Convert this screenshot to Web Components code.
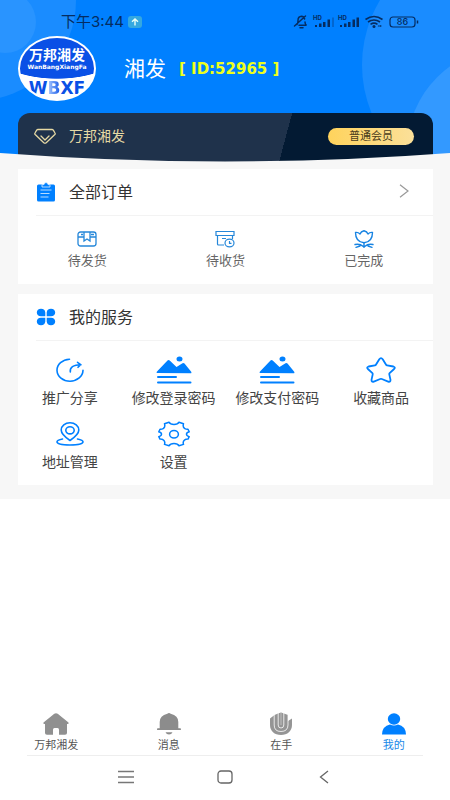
<!DOCTYPE html>
<html lang="zh-CN">
<head>
<meta charset="utf-8">
<meta name="viewport" content="width=device-width, initial-scale=1">
<title>我的</title>
<style>
  body { margin: 0; background: #fff; color: #333; font-family: Inter, "Noto Sans CJK SC", sans-serif; }
</style>
</head>
<body>
<profile-page></profile-page>

<script>
const ICONS = {
  clipboard: ['0 0 20 20', `<g fill="#0080ff"><rect x="1" y="2.5" width="18" height="17" rx="1.5"/><path d="M6 5V2.6h2a2 2 0 0 1 4 0h2V5z" stroke="#fff" stroke-width=".7"/></g><path d="M4.5 8h11M4.5 11.5h9M4.5 15h8" stroke="#b8dcff" stroke-width="1.2"/>`],
  clover: ['0 0 20 18', `<g fill="#0080ff"><path d="M9.300 8.300V4.500A4.300 4 0 0 0 5 .8C2.500 .8.800 2.300.800 4.500S2.500 8.300 5 8.300zM10.700 8.300V4.500A4.300 4 0 0 1 15 .8c2.500 0 4.200 1.500 4.200 3.700S17.500 8.300 15 8.300zM9.300 9.700V13.500a4.300 4 0 0 1-4.300 3.700C2.500 17.200.8 15.700.8 13.500S2.500 9.700 5 9.700zM10.700 9.700V13.500a4.300 4 0 0 0 4.300 3.700c2.500 0 4.200-1.500 4.200-3.700S17.500 9.700 15 9.700z"/></g>`],
  chevron: ['0 0 10 14', `<path d="M1 .8 9 7l-8 6.200" fill="none" stroke="#999" stroke-width="1.200"/>`],
  gem: ['0 0 22 16', `<g fill="none" stroke="#e6d9a4" stroke-width="1.300" stroke-linejoin="round" stroke-linecap="round"><path d="M4 1.500h14q.8 0 1.300.6L21 5q.5.800-.2 1.500l-8.600 8.200q-1.200 1-2.400 0L1.200 6.500Q.5 5.800 1 5l1.700-2.900Q3.200 1.500 4 1.500z"/><path d="m7 8 4 4 4-4"/></g>`],
  box: ['0 0 20 16', `<g fill="none" stroke="#2587d9" stroke-width="1.300"><rect x="1" y="1" width="18" height="14" rx="2.500"/><path d="M1 6h6m6 0h6M7 1v9l3-2 3 2V1M4 3.500h2M14 3.500h3"/></g>`],
  receive: ['0 0 20 18', `<g fill="none" stroke="#2587d9" stroke-width="1.200"><path d="M1 1.500h18v4H1zM2.500 5.500V14q0 1 1 1H9M17.500 5.500V9M7 8.500h4"/><ellipse cx="14.500" cy="13" rx="4.500" ry="3.800"/><path d="M14.500 11v2.300h2"/></g>`],
  tulip: ['0 0 20 18', `<g fill="none" stroke="#1783e2" stroke-width="1.400" stroke-linecap="round" stroke-linejoin="round"><path d="M1.500 2.500Q4 2 6 4q1-2.500 4-3.300Q13 1.500 14 4q2-2 4.500-1.500 0 9.500-8.500 10.300Q1.500 12 1.500 2.500z"/><path d="M10 13v4.500M1 14.500q5-1 8 1.800M19 14.500q-5-1-8 1.800M2 17.300l4-1.300M18 17.300 14 16"/></g>`],
  share: ['0 0 28 24', `<g fill="none" stroke="#0080ff" stroke-width="1.600" stroke-linecap="round" stroke-linejoin="round"><path d="M13.500 1.200A13 11 0 1 0 27 12.300"/><path d="M14.300 14q-1-7 10.700-7.300M21.500 4.300 24.700 6.600l-2.700 2.700"/></g>`],
  image: ['0 0 36 28', `<g fill="#0080ff"><path d="M.8 17Q.2 16.300 1 15.600L11.500 4.400q1-1 2.200 0L20.500 11l6-3.800q1-.6 2 .2L35 15.600q.9.700.2 1.600z"/><ellipse cx="23.500" cy="3" rx="3" ry="2.500"/><rect x="1" y="20" width="20" height="2" rx="1"/><rect x="1" y="25.500" width="34.500" height="2" rx="1"/></g>`],
  star: ['0 0 30 26', `<path d="M13.300 2.300q1.700-2.300 3.400 0l3.400 5.400q.3.500 1 .600l6.300 1.200q2.400.7.700 2.500l-4.500 4.200q-.5.500-.3 1.200l1.200 5.500q.1 2.400-2.300 1.700L15.800 22q-.8-.3-1.600 0l-6.400 2.600q-2.400.7-2.300-1.700l1.200-5.500q.2-.7-.3-1.200L1.900 12Q.2 10.200 2.600 9.500l6.300-1.200q.7-.1 1-.6z" fill="none" stroke="#0080ff" stroke-width="1.800" stroke-linejoin="round"/>`],
  place: ['0 0 28 24', `<g fill="none" stroke="#0080ff" stroke-width="1.600" stroke-linejoin="round" stroke-linecap="round"><path d="M14 18.500Q5.200 12.500 5.200 8A8.800 7.200 0 0 1 22.800 8q0 4.500-8.800 10.500z"/><ellipse cx="14" cy="8.300" rx="4.200" ry="3.600"/><path d="M6.500 17Q1 18 1 19.800C1 21.800 6.500 23 14 23s13-1.200 13-3.200q0-1.800-5.500-2.800"/></g>`],
  gear: ['0 0 32 26', `<g fill="none" stroke="#0080ff" stroke-width="1.500" stroke-linejoin="round"><path d="M11 1.200q1.200 2.300 5 2.300t5-2.300l4.500 1.600q-1 3.300 1.200 4.700 1.300.9 3.300.8l1.200 2.500q-2.700.8-2.700 2.400t2.700 2.400L30 18.100q-2-.1-3.300.8-2.200 1.400-1.200 4.500L21 24.800q-1.200-2.300-5-2.300t-5 2.300l-4.500-1.400q1-3.100-1.200-4.500Q4 18 2 18.100L.800 15.600q2.700-.8 2.700-2.400T.800 10.800L2 8.300q2 .1 3.300-.8 2.200-1.400 1.200-4.700z"/><ellipse cx="16" cy="13.200" rx="4.400" ry="3.700"/></g>`],
  home: ['0 0 26 22', `<path fill="#909090" d="M11.300.8q1.700-1 3.400 0L25.200 9.300q1.200 1.500-.6 1.700H24V20q0 1.700-2 1.700h-6v-5q0-1.700-1.500-1.700h-3q-1.500 0-1.500 1.700v5H4Q2 21.700 2 20V11h-.6Q-.4 10.800.8 9.300z"/>`],
  bell: ['0 0 24 24', `<g fill="#8c8c8c"><path d="M10.300 1.800q1.700-1.800 3.400 0Q21.300 3.600 21.300 10v6.300h1.900q.8 0 .8.900t-.8.900H.8Q0 18.100 0 17.200t.8-.9h1.900V10q0-6.400 7.600-8.200z"/><path d="M8.500 20.300h7Q14.500 22.500 12 22.500T8.500 20.300z"/></g>`],
  hand: ['0 0 24 24', `<path d="M1 6.500 5.500 3 9 1.500 12 .5l3 1 4 1.500v6l4-2.500V13c0 6-4.500 10-11 10S1 19 1 13z" fill="#959595"/><path d="M5.200 3v10q0 6.500 6.800 6.500t7-6.500V3M9.200 1v12q0 3 2.800 3t2.800-3V1" fill="none" stroke="#fff" stroke-width=".8"/><path d="M12 .8V13" stroke="#ddd" stroke-width=".6"/>`],
  person: ['0 0 24 22', `<g fill="#0080ff"><ellipse cx="12" cy="6" rx="6.200" ry="5.800"/><path d="M0 21.500Q.3 13 8 11.500q4 2.200 8 0 7.700 1.500 8 10z"/></g>`],
  menu: ['0 0 16 14', `<path d="M0 1.500h16M0 7h16M0 12.500h16" stroke="#777" stroke-width="1.300"/>`],
  square: ['0 0 16 14', `<rect x="1" y="1" width="14" height="12" rx="3" fill="none" stroke="#666" stroke-width="1.300"/>`],
  back: ['0 0 10 14', `<path d="M9 1 1.500 7 9 13" fill="none" stroke="#666" stroke-width="1.300"/>`],
  status: ['0 0 126 16', `<g fill="none" stroke="#052c61" stroke-width="1.500" stroke-linecap="round"><path d="M4 10.500q1-1 1-4 0-4 3.500-4.200Q11 2.300 11.600 5M12 8q0 2.500 1.500 3.200H6M1.500 12 12.500 2M7 13.700h3"/></g>
    <g fill="#052c61"><path d="M22 11h2v2h-2zM26 9.500h2.500V13H26zM30 8h2.500v5H30zM34.500 5.500H37V13h-2.500zM47 11h2v2h-2zM51 9.500h2.500V13H51zM55 8h2.500v5H55zM59.500 5.500H62V13h-2.500zM63.500 3.500H66V13h-2.500z"/><path d="M39 3.500h2V13h-2z" opacity=".3"/><circle cx="81" cy="12.500" r="1.500"/><path d="m84.500 12 2-1v2zm2.500-1 2 1-2 1z"/></g>
    <text x="20" y="6" font-size="6" font-weight="700" font-family="Inter,sans-serif" fill="#052c61">HD</text><text x="45" y="6" font-size="6" font-weight="700" font-family="Inter,sans-serif" fill="#052c61">HD</text>
    <g fill="none" stroke="#052c61" stroke-width="1.600"><path d="M72.500 5.500q8.500-6 17 0M75 8q6-4 12 0M77.500 10.300q3.500-2.300 7 0"/></g>
    <rect x="97" y="3" width="25" height="10" rx="3" fill="none" stroke="#052c61" stroke-width="1.200"/><path d="M124.500 6.500v3" stroke="#052c61" stroke-width="1.500"/>
    <text x="109.500" y="11" text-anchor="middle" font-size="9" font-weight="500" font-family="Inter,sans-serif" fill="#052c61">86</text>`],
  upload: ['0 0 14 12', `<rect width="14" height="12" rx="3" fill="#35a8e0"/><path d="M7 9.500v-6M4 5.800 7 3l3 2.800" fill="none" stroke="#e8fff8" stroke-width="1.400"/>`]
};

function define(name, html, init) {
  const template = document.createElement('template');
  template.innerHTML = html;
  customElements.define(name, class extends HTMLElement {
    constructor() {
      super();
      this.attachShadow({ mode: 'open' }).append(template.content.cloneNode(true));
    }
    connectedCallback() { if (init) init(this, this.shadowRoot); }
  });
}

define('ui-icon', `<style>:host{display:inline-flex;flex:none}svg{display:block}</style><span></span>`, (host, root) => {
  const [box, art] = ICONS[host.getAttribute('name')];
  const [, , w, h] = box.split(' ');
  root.querySelector('span').innerHTML = `<svg viewBox="${box}" width="${w}" height="${h}" aria-hidden="true">${art}</svg>`;
});

define('status-bar', `<style>
  :host{display:flex;align-items:center;justify-content:space-between;height:16px;padding:14px 31px 0 61px;color:#052c61;font-size:15px;line-height:16px}
  .time{display:flex;align-items:center;gap:4px}
</style><span class="time"><span>下午3:44</span><ui-icon name="upload"></ui-icon></span><ui-icon name="status"></ui-icon>`);

define('user-avatar', `<style>
  :host{display:flex;flex-direction:column;align-items:center;box-sizing:border-box;width:78px;height:65px;border:2px solid #fff;border-radius:50%;overflow:hidden;
    background:radial-gradient(ellipse 70px 34px at 50% 7px,#0a50e6 98%,#fff 100%);color:#fff;white-space:nowrap;padding-top:9px}
  .cn{font-size:14px;line-height:16px;font-weight:700}
  .en{font-size:6px;line-height:7px;font-weight:700;font-family:"DejaVu Sans",sans-serif}
  .mark{margin-top:10px;font:700 17px/16px "DejaVu Sans",sans-serif;color:#0a50e6}
  .mark span{background:linear-gradient(90deg,#a8c8ff,#0a50e6);-webkit-background-clip:text;background-clip:text;color:transparent}
</style><span class="cn">万邦湘发</span><span class="en">WanBangXiangFa</span><span class="mark">W<span>B</span>XF</span>`);

define('member-card', `<style>
  :host{display:flex;align-items:center;box-sizing:border-box;height:50px;padding:0 19px 4px 16px;border-radius:12px 12px 0 0;color:#e6d9a4;
    background:linear-gradient(105deg,#1f324b 64%,#031a33 64%)}
  .name{margin-left:13px;font-size:14px;line-height:20px;flex:1}
  .level{width:86px;height:17px;line-height:17px;border-radius:9px;text-align:center;font-size:11px;color:#4a3c1c;background:linear-gradient(90deg,#ffd35c,#fbe09a)}
</style><ui-icon name="gem"></ui-icon><span class="name"><slot></slot></span><span class="level"><slot name="level"></slot></span>`);

define('profile-header', `<style>
  :host{display:block;position:relative;overflow:hidden;background:#0080ff}
  .art,.curve{position:absolute;top:0;left:0}
  .art.right{left:auto;right:0}
  .curve{top:auto;bottom:0;width:100%;height:12px}
  .content{position:relative}
  .user{display:flex;align-items:center;padding:6px 18px 12px;height:65px}
  .nick{margin-left:28px;font-size:21px;line-height:28px;color:#fff}
  .id{margin-left:13px;font:700 15px/20px "DejaVu Sans",sans-serif;color:#eeff1c;white-space:pre}
  member-card{margin:0 17px 0 18px}
</style>
<svg class="art" width="90" height="110" aria-hidden="true"><circle cx="-25" cy="0" r="101" fill="#1a8cff"/><circle cx="5" cy="22" r="31" fill="#2994ff"/></svg>
<svg class="art right" width="90" height="163" aria-hidden="true"><circle cx="128" cy="65" r="126" fill="#1a8cff"/><circle cx="150" cy="150" r="103" fill="#3399ff"/></svg>
<div class="content">
  <status-bar></status-bar>
  <div class="user"><user-avatar></user-avatar><span class="nick">湘发</span><span class="id">[ ID:52965 ]</span></div>
  <member-card>万邦湘发<span slot="level">普通会员</span></member-card>
</div>
<svg class="curve" viewBox="0 0 450 12" preserveAspectRatio="none" aria-hidden="true"><path d="M0 2Q225 19 450 2V12H0z" fill="#f7f7f7"/></svg>`);

define('panel-box', `<style>
  :host{display:block;background:#fff}
  header{display:flex;align-items:center;height:46px;margin-left:18px;border-bottom:1px solid #f3f3f3}
  h2{flex:1;margin:0 0 0 13px;font-size:16px;line-height:22px;font-weight:400;color:#333}
  .more{border:0;background:none;padding:8px;margin-right:16px}
</style><header><h2></h2></header><slot></slot>`, (host, root) => {
  root.querySelector('h2').textContent = host.getAttribute('heading');
  const header = root.querySelector('header');
  header.insertAdjacentHTML('afterbegin', `<ui-icon name="${host.getAttribute('icon')}"></ui-icon>`);
  if (host.hasAttribute('more'))
    header.insertAdjacentHTML('beforeend', '<button class="more" aria-label="查看全部"><ui-icon name="chevron"></ui-icon></button>');
});

define('icon-button', `<style>
  :host{display:block;min-width:0}
  button{display:flex;flex-direction:column;align-items:center;width:100%;padding:0;border:0;background:none;font:inherit;color:inherit;white-space:nowrap;cursor:pointer}
  .pic{display:flex;align-items:center;height:var(--pic,28px);margin-bottom:var(--gap,4px)}
</style><button><span class="pic"><slot name="icon"></slot></span><slot></slot></button>`);

const items = (list) => list.map(([icon, text, on]) => `<icon-button${on ? ' class="on"' : ''}><ui-icon slot="icon" name="${icon}"></ui-icon>${text}</icon-button>`).join('');

define('order-list', `<style>
  :host{display:grid;grid-template-columns:repeat(3,1fr);padding:13px 0 14px;font-size:13px;line-height:20px;color:#666;--pic:20px;--gap:1px}
</style>${items([['box','待发货'],['receive','待收货'],['tulip','已完成']])}`);

define('service-list', `<style>
  :host{display:grid;grid-template-columns:repeat(4,1fr);row-gap:12px;padding:15px 0 13px;font-size:14px;line-height:20px;color:#444}
</style>${items([['share','推广分享'],['image','修改登录密码'],['image','修改支付密码'],['star','收藏商品'],['place','地址管理'],['gear','设置']])}`);

define('tab-bar', `<style>
  :host{display:grid;grid-template-columns:repeat(4,1fr);font-size:11px;line-height:16px;color:#555;padding-bottom:2px;--pic:24px;--gap:1px}
  .on{color:#1787e8}
</style>${items([['home','万邦湘发'],['bell','消息'],['hand','在手'],['person','我的',true]])}`);

define('system-nav', `<style>
  :host{display:grid;grid-template-columns:repeat(3,1fr);align-items:center;height:44px;margin:0 27px;padding:0 11%;border-top:1px solid #eee}
  button{justify-self:center;border:0;background:none;padding:4px}
</style><button aria-label="菜单"><ui-icon name="menu"></ui-icon></button><button aria-label="主屏幕"><ui-icon name="square"></ui-icon></button><button aria-label="返回"><ui-icon name="back"></ui-icon></button>`);

define('profile-page', `<style>
  :host{display:flex;flex-direction:column;min-height:100vh}
  main{display:flex;flex-direction:column;gap:10px;padding:6px 17px 14px 18px;background:#f7f7f7}
  .space{flex:1}
</style>
<profile-header></profile-header>
<main>
  <panel-box heading="全部订单" icon="clipboard" more><order-list></order-list></panel-box>
  <panel-box heading="我的服务" icon="clover"><service-list></service-list></panel-box>
</main>
<div class="space"></div>
<tab-bar></tab-bar>
<system-nav></system-nav>`);
</script>
</body>
</html>
